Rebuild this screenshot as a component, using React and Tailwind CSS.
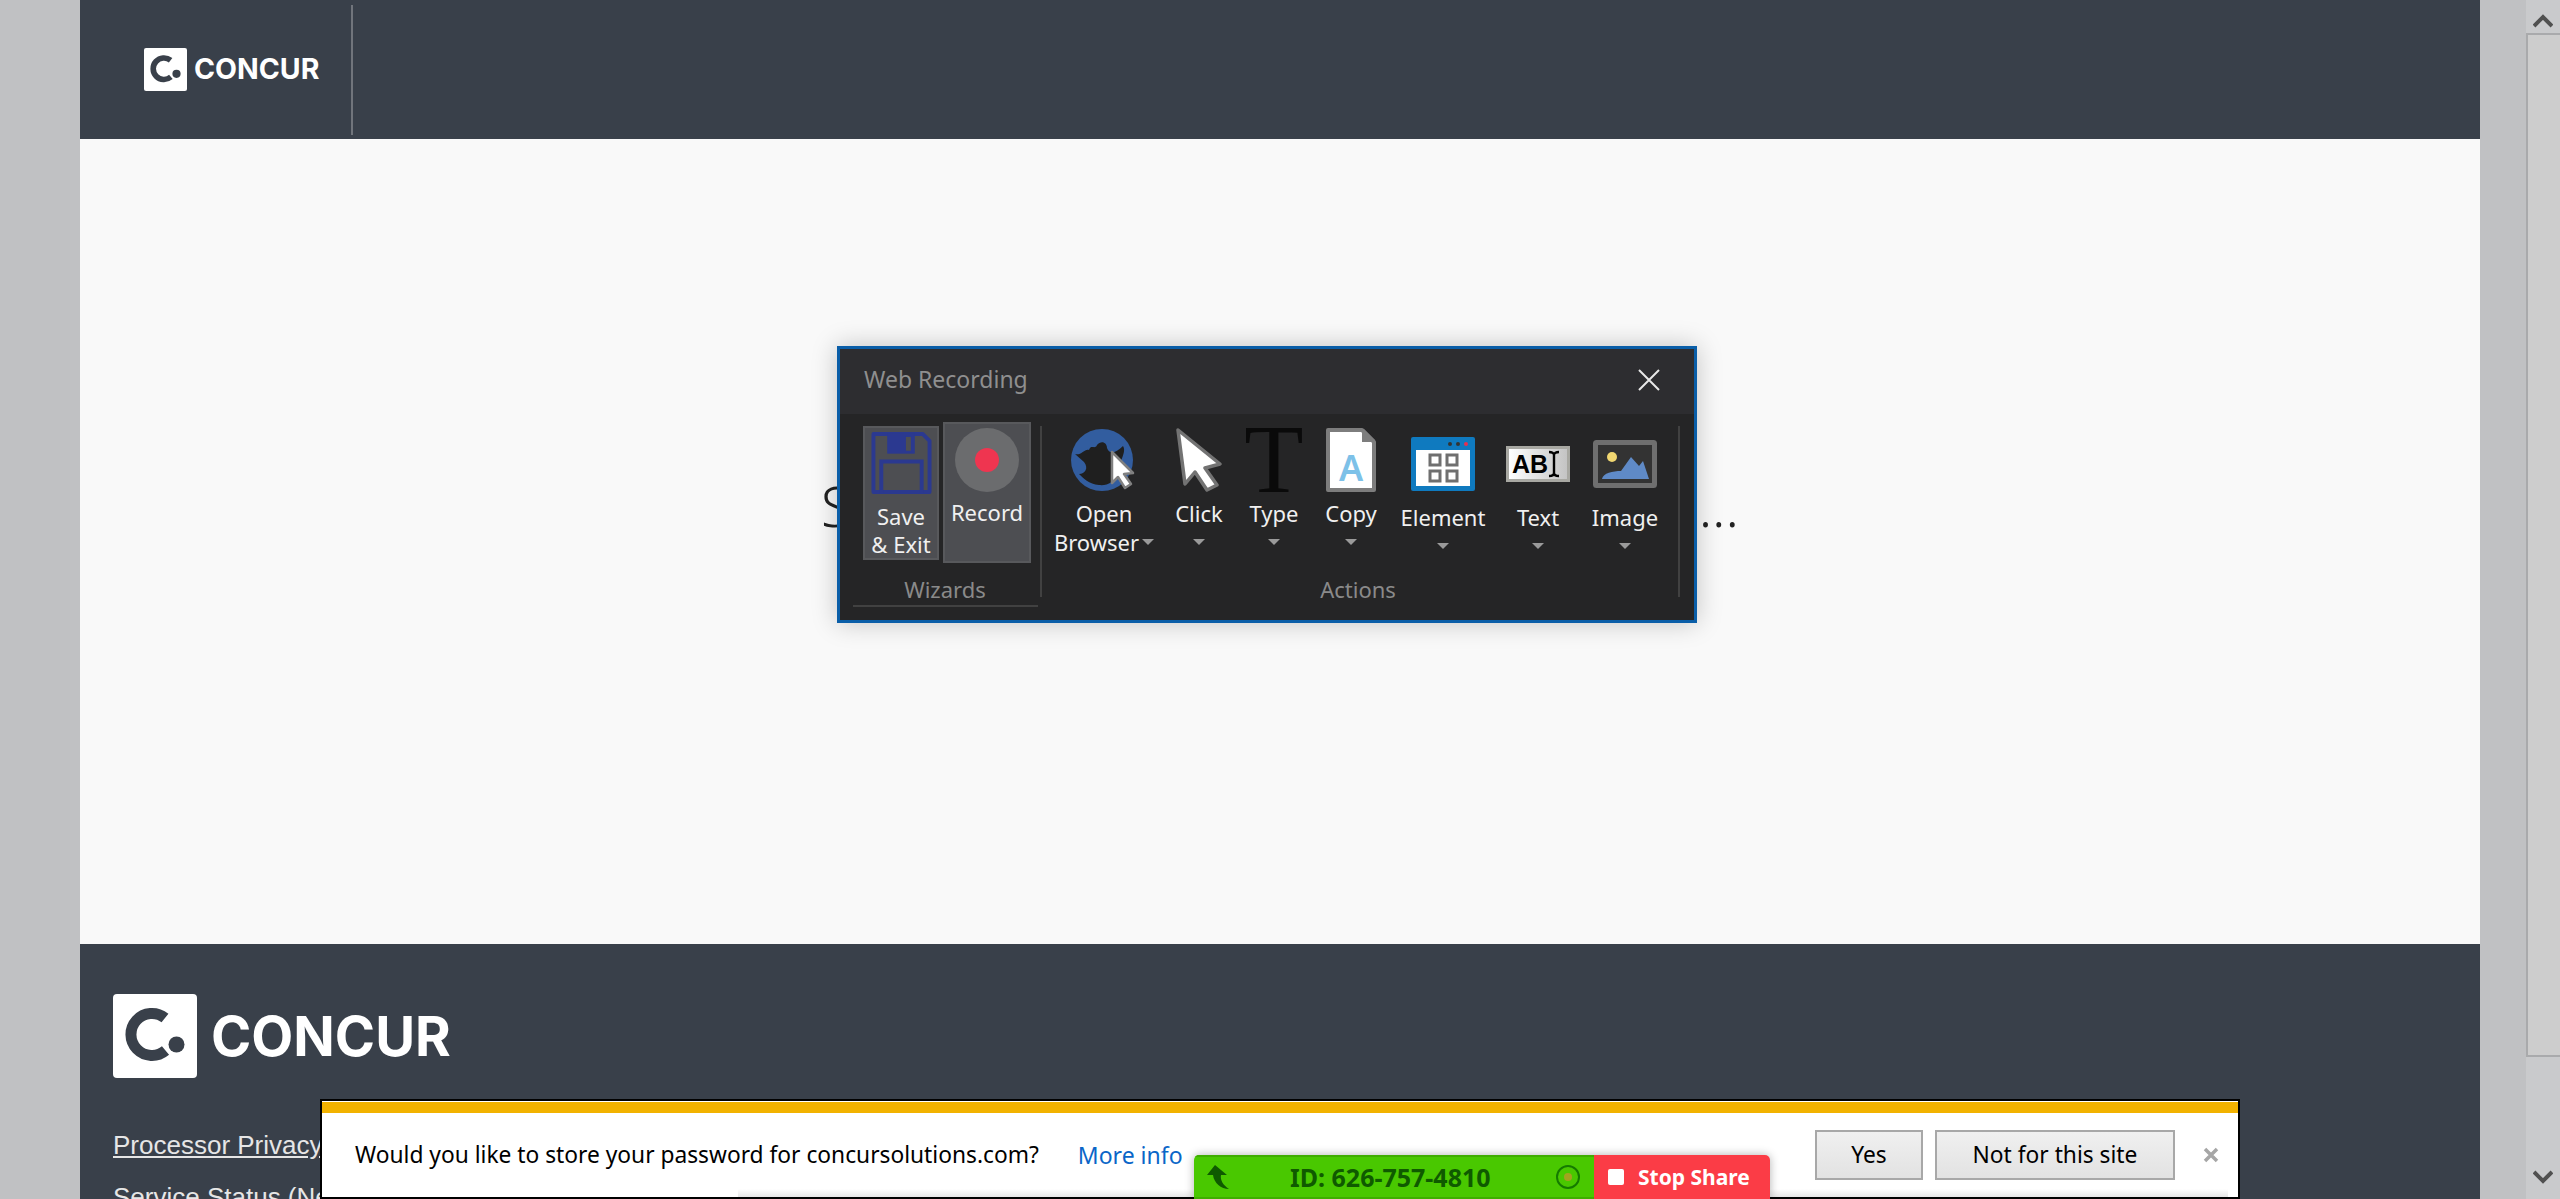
const barFont = { fontFamily: '"Noto Sans", "Open Sans", sans-serif' };

function ConcurMark({ size }) {
  return (
    <svg width={size} height={size} viewBox="0 0 84 84" className="shrink-0">
      <rect width="84" height="84" rx="4" fill="#fff" />
      <path d="M52 24A21 21 0 1 0 52.5 56.5" fill="none" stroke="#39404a" strokeWidth="11" />
      <circle cx="63.5" cy="50.5" r="8" fill="#39404a" />
    </svg>
  );
}

function SaveIcon() {
  return (
    <svg width="62" height="64" viewBox="0 0 62 64">
      <path d="M3 2H53L60 9V61H3Z" fill="none" stroke="#2b3990" strokeWidth="4" strokeLinejoin="round" />
      <rect x="17" y="2" width="28" height="20" fill="#2b3990" />
      <rect x="36" y="5" width="5" height="14" fill="#4d4e52" />
      <path d="M11 62V30H52V62" fill="none" stroke="#2b3990" strokeWidth="4" />
    </svg>
  );
}

function RecordIcon() {
  return (
    <svg width="64" height="64" viewBox="0 0 64 64">
      <circle cx="32" cy="32" r="32" fill="#6b6c6e" />
      <circle cx="32" cy="32" r="12" fill="#ef3550" />
    </svg>
  );
}

function BrowserIcon() {
  return (
    <svg width="66" height="64" viewBox="0 0 66 64">
      <circle cx="31" cy="32" r="31" fill="#325d9f" />
      <path d="M4 26C10 28 14 20 18 22C20 16 24 22 26 17C30 12 36 14 36 20C38 26 44 26 52 18C56 24 48 34 46 46C44 54 36 58 28 57C18 56 12 50 8 46C14 46 18 40 13 34Z" fill="#1f1f1f" />
      <path d="M41 24L62 45L53 46L60 56L54 60L47 49L41 55Z" fill="#fff" stroke="#808080" strokeWidth="2.5" strokeLinejoin="round" />
    </svg>
  );
}

function ClickIcon() {
  return (
    <svg width="46" height="64" viewBox="0 0 46 64">
      <path d="M2 2L44 36L29 40L41 57L31 62L19 44L9 56Z" fill="#fff" stroke="#737373" strokeWidth="3.5" strokeLinejoin="round" />
    </svg>
  );
}

function TypeIcon() {
  return (
    <svg width="60" height="64" viewBox="0 0 60 64">
      <text x="30" y="64" fontSize="97" textAnchor="middle" fontFamily="Liberation Serif" fill="#0a0a0a">T</text>
    </svg>
  );
}

function CopyIcon() {
  return (
    <svg width="50" height="64" viewBox="0 0 50 64">
      <path d="M2 2H36L48 14V62H2Z" fill="#fff" stroke="#7d7d7d" strokeWidth="4" strokeLinejoin="round" />
      <path d="M36 1H38L49 12V14H36Z" fill="#7d7d7d" />
      <text x="25" y="53" fontSize="36" fontWeight="600" textAnchor="middle" fontFamily="Noto Sans" fill="#7dc1e8">A</text>
    </svg>
  );
}

function ElementIcon() {
  return (
    <svg width="64" height="54" viewBox="0 0 64 54">
      <rect width="64" height="54" rx="2" fill="#0f7abf" />
      <rect x="5" y="13" width="54" height="36" fill="#fff" />
      <circle cx="39" cy="7" r="2" fill="#333" />
      <circle cx="47" cy="7" r="2" fill="#333" />
      <circle cx="55" cy="7" r="2" fill="#e8304f" />
      <g fill="none" stroke="#6f6f6f" strokeWidth="3">
        <rect x="19" y="18" width="10" height="10" />
        <rect x="36" y="18" width="10" height="10" />
        <rect x="19" y="34" width="10" height="10" />
        <rect x="36" y="34" width="10" height="10" />
      </g>
    </svg>
  );
}

function TextIcon() {
  return (
    <div className="flex h-[36px] w-[64px] items-center border-[3px] border-[#a8a8a2] bg-gradient-to-r from-white to-[#c4c4c4] pl-[3px]">
      <span className="text-[25px] font-bold leading-none text-black" style={{ fontFamily: '"Liberation Sans", sans-serif' }}>AB</span>
      <svg width="12" height="28" viewBox="0 0 12 28" className="shrink-0">
        <path d="M1 2C4 2 6 3 6 5V23C6 25 4 26 1 26M11 2C8 2 6 3 6 5M6 23C6 25 8 26 11 26" fill="none" stroke="#000" strokeWidth="2.4" />
      </svg>
    </div>
  );
}

function ImageIcon() {
  return (
    <svg width="64" height="48" viewBox="0 0 64 48">
      <rect x="2.5" y="2.5" width="59" height="43" rx="1" fill="#333" stroke="#6f6f6f" strokeWidth="5" />
      <circle cx="19" cy="17" r="5" fill="#f1d771" />
      <path d="M9 39C10 33 20 31 28 31L38 17L46 26L50 21L56 39Z" fill="#5f8ac7" />
    </svg>
  );
}

function Caret({ className = '' }) {
  return <span className={`inline-block h-0 w-0 border-x-[6px] border-t-[6px] border-x-transparent border-t-[#9a9a9a] ${className}`} />;
}

function ActionButton({ width, lowered, icon, label, second }) {
  return (
    <div className={`flex shrink-0 flex-col items-center ${width} ${lowered ? 'pt-[10px]' : 'pt-[6px]'}`}>
      <div className="flex h-[64px] items-center justify-center">{icon}</div>
      <div className="mt-[7px] h-[28px] text-[22px] leading-[28px] text-[#f0f0f0]">{label}</div>
      <div className="mt-[1px] flex h-[28px] items-center text-[22px] leading-[28px] text-[#f0f0f0]">
        {second}
        <Caret className={second ? 'ml-[3px]' : ''} />
      </div>
    </div>
  );
}

function RecordingDialog() {
  return (
    <div
      className="absolute left-[837px] top-[346px] flex h-[277px] w-[860px] flex-col border-[3px] border-[#0a5ea8] bg-[#252526] shadow-[0_0_24px_rgba(0,0,0,0.22)]"
      style={barFont}
    >
      <div className="flex h-[65px] shrink-0 items-center justify-between bg-[#2d2d30] pb-[4px] pl-[24px] pr-[33px]">
        <span className="text-[23px] text-[#8f8f8f]">Web Recording</span>
        <svg width="24" height="24" viewBox="0 0 24 24">
          <path d="M2 2L22 22M22 2L2 22" stroke="#e8e8e8" strokeWidth="2" />
        </svg>
      </div>
      <div className="flex pt-[8px]">
        <div className="ml-[13px] flex w-[185px] shrink-0 flex-col border-b-2 border-[#414141] pb-[2px]">
          <div className="flex h-[141px] items-start gap-[4px] pl-[10px]">
            <div className="mt-[4px] flex h-[134px] w-[76px] flex-col items-center border-2 border-[#58595c] bg-[#4d4e52] pt-[4px]">
              <SaveIcon />
              <div className="mt-[7px] text-center text-[22px] leading-[28px] text-[#f0f0f0]">Save<br />&amp; Exit</div>
            </div>
            <div className="flex h-[141px] w-[88px] flex-col items-center border-2 border-[#58595c] bg-[#4d4e52] pt-[4px]">
              <RecordIcon />
              <div className="mt-[6px] text-[22px] leading-[28px] text-[#f0f0f0]">Record</div>
            </div>
          </div>
          <div className="mt-[12px] h-[28px] pr-[1px] text-center text-[22px] leading-[28px] text-[#8a8a8a]">Wizards</div>
        </div>
        <div className="mt-[4px] ml-[2px] h-[171px] w-[2px] shrink-0 bg-[#414141]" />
        <div className="ml-[6px] flex flex-col">
          <div className="flex h-[153px]">
            <ActionButton width="w-[112px]" icon={<BrowserIcon />} label="Open" second="Browser" />
            <ActionButton width="w-[78px]" icon={<ClickIcon />} label="Click" />
            <ActionButton width="w-[72px]" icon={<TypeIcon />} label="Type" />
            <ActionButton width="w-[82px]" icon={<CopyIcon />} label="Copy" />
            <ActionButton width="w-[102px]" lowered icon={<ElementIcon />} label="Element" />
            <ActionButton width="w-[88px]" lowered icon={<TextIcon />} label="Text" />
            <ActionButton width="w-[86px]" lowered icon={<ImageIcon />} label="Image" />
          </div>
          <div className="h-[28px] text-center text-[22px] leading-[28px] text-[#8a8a8a]">Actions</div>
        </div>
        <div className="mt-[4px] ml-[10px] h-[171px] w-[2px] shrink-0 bg-[#414141]" />
      </div>
    </div>
  );
}

function PasswordBar() {
  return (
    <div
      className="absolute left-[320px] top-[1099px] flex h-[100px] w-[1920px] flex-col border-2 border-black bg-white"
      style={barFont}
    >
      <div className="mt-[1px] h-[11px] shrink-0 bg-[#f2b200]" />
      <div className="flex flex-1 items-center pl-[33px]">
        <span className="text-[22.75px] text-black">Would you like to store your password for concursolutions.com?</span>
        <span className="ml-[39px] text-[23px] text-[#0a66c8]">More info</span>
        <div className="ml-auto flex items-center">
          <button className="h-[50px] w-[108px] border-2 border-[#a8a8a8] bg-gradient-to-b from-[#f0f0f0] to-[#e2e2e2] text-[22.75px] text-black">Yes</button>
          <button className="ml-[12px] h-[50px] w-[240px] border-2 border-[#a8a8a8] bg-gradient-to-b from-[#f0f0f0] to-[#e2e2e2] text-[22.75px] text-black">Not for this site</button>
          <svg width="16" height="16" viewBox="0 0 16 16" className="ml-[28px] mr-[19px]">
            <path d="M2 2L14 14M14 2L2 14" stroke="#a6a6a6" strokeWidth="3.5" />
          </svg>
        </div>
      </div>
      {/* faint shadow along the bottom edge */}
      <div className="absolute bottom-0 left-[416px] right-[10px] h-[8px] bg-gradient-to-b from-transparent to-[#e6e6e6]" />
    </div>
  );
}

function ShareBar() {
  return (
    <div
      className="absolute left-[1194px] top-[1155px] flex h-[44px] w-[576px] overflow-hidden rounded-t-[5px] shadow-[0_0_10px_rgba(0,0,0,0.3)]"
      style={barFont}
    >
      <div className="flex w-[400px] items-center border-y-2 border-[#3fad00] bg-[#49c800] pl-[11px]">
        <svg width="24" height="24" viewBox="0 0 24 24" className="shrink-0">
          <path d="M10 0L22 10H16C15 15 18 20 24 24C16 24 9 18 8 10H2Z" fill="#0f5a00" />
        </svg>
        <span className="ml-[61px] text-[25px] font-bold leading-none text-[#0f5a00]">ID: 626-757-4810</span>
        <span className="ml-[65px] flex h-[24px] w-[24px] items-center justify-center rounded-full border-2 border-[#157a00]">
          <span className="h-[8px] w-[8px] rounded-full bg-[#a3a31f]" />
        </span>
      </div>
      <div className="flex flex-1 items-center bg-[#fb3c46] pl-[14px]">
        <span className="h-[16px] w-[16px] rounded-[2px] bg-white" />
        <span className="ml-[14px] text-[21px] font-bold leading-none text-white">Stop Share</span>
      </div>
    </div>
  );
}

export default function App() {
  return (
    <div className="relative flex h-[1199px] w-[2560px] overflow-hidden bg-[#c0c1c3]">
      <div className="w-[80px] shrink-0" />
      <main className="flex w-[2400px] shrink-0 flex-col">
        <header className="flex h-[139px] shrink-0 items-center bg-[#39404a] pl-[64px]">
          <ConcurMark size={43} />
          <span className="ml-[7px] text-[28.5px] font-bold leading-none text-white" style={{ fontFamily: 'Inter, sans-serif' }}>CONCUR</span>
          <div className="ml-[32px] h-[130px] w-[2px] bg-[#71757c]" />
        </header>
        <div className="flex flex-1 items-center justify-center bg-[#f9f9f9] pb-[70px]">
          <span className="text-[55px] font-light text-[#222]" style={{ fontFamily: '"Noto Sans", sans-serif' }}>Signing you in, one moment please...</span>
        </div>
        <footer className="h-[255px] shrink-0 overflow-hidden bg-[#39404a] pl-[33px] pt-[50px]">
          <div className="flex items-center">
            <ConcurMark size={84} />
            <span className="ml-[14px] text-[54.5px] font-bold leading-none text-white" style={{ fontFamily: 'Inter, sans-serif' }}>CONCUR</span>
          </div>
          <a className="mt-[52px] block text-[26px] leading-[30px] text-[#e6e6e6] underline" style={{ fontFamily: '"Liberation Sans", sans-serif' }}>Processor Privacy Statement</a>
          <a className="mt-[22px] block text-[26px] leading-[30px] text-[#e6e6e6]" style={{ fontFamily: '"Liberation Sans", sans-serif' }}>Service Status (New)</a>
        </footer>
      </main>
      <div className="w-[46px] shrink-0" />
      <div className="flex w-[34px] shrink-0 flex-col items-center bg-[#c9cacc]">
        <svg width="20" height="14" viewBox="0 0 20 14" className="mt-[14px] mb-[5px] shrink-0">
          <path d="M1 12L10 3L19 12" fill="none" stroke="#505050" strokeWidth="4" />
        </svg>
        <div className="h-[1024px] w-full border-2 border-r-0 border-[#a9aaac] bg-[#cdcdcd]" />
        <svg width="20" height="14" viewBox="0 0 20 14" className="mt-auto mb-[15px] shrink-0">
          <path d="M1 2L10 11L19 2" fill="none" stroke="#505050" strokeWidth="4" />
        </svg>
      </div>
      <RecordingDialog />
      <PasswordBar />
      <ShareBar />
    </div>
  );
}
